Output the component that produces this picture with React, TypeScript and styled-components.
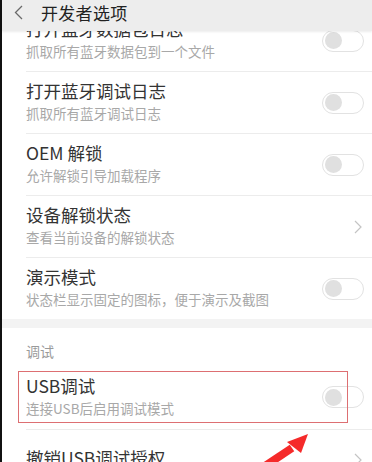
import styled, { createGlobalStyle } from "styled-components";

const GlobalStyle = createGlobalStyle`
  html, body {
    margin: 0;
    padding: 0;
    background: #ffffff;
  }
  body {
    font-family: "Noto Sans CJK SC", "Noto Sans", sans-serif;
  }
`;

const Frame = styled.div`
  position: relative;
  width: 372px;
  height: 462px;
  display: flex;
  overflow: hidden;
  background: #ffffff;
`;

const EdgeStrip = styled.div`
  width: 2px;
  flex-shrink: 0;
  background: #111111;
`;

const Screen = styled.div`
  flex: 1;
  display: flex;
  flex-direction: column;
  min-width: 0;
`;

const Header = styled.header`
  height: 31px;
  flex-shrink: 0;
  display: flex;
  align-items: center;
  gap: 18px;
  padding: 0 0 6px 12px;
  box-sizing: border-box;
  background: #ededed;
  box-shadow: 0 1px 2px rgba(0, 0, 0, 0.08);
  position: relative;
  z-index: 1;
`;

const HeaderTitle = styled.h1`
  margin: 0;
  font-size: 17px;
  font-weight: 400;
  color: #222222;
  letter-spacing: 0.3px;
`;

const Viewport = styled.div`
  flex: 1;
  overflow: hidden;
`;

// 列表已向上滚动了一部分
const List = styled.div`
  margin-top: -21px;
`;

const Row = styled.div`
  position: relative;
  padding-left: 24px;
`;

const RowInner = styled.div<{ $noLine?: boolean; $h?: number }>`
  display: flex;
  align-items: center;
  height: ${(p) => p.$h ?? 62}px;
  padding-right: 8px;
  box-sizing: border-box;
  border-bottom: ${(p) => (p.$noLine ? "none" : "1px solid #ececec")};
`;

const Texts = styled.div`
  flex: 1;
  display: flex;
  flex-direction: column;
  padding-bottom: 3px;
`;

const Title = styled.div`
  font-size: 17.5px;
  line-height: 24px;
  color: #333333;
`;

const Sub = styled.div`
  font-size: 13.5px;
  line-height: 20px;
  color: #a8a8a8;
`;

const Toggle = styled.div`
  width: 42px;
  height: 22px;
  border: 1px solid #e2e2e2;
  border-radius: 12px;
  box-sizing: border-box;
  display: flex;
  align-items: center;
  padding-left: 2px;
  background: #ffffff;
`;

const Knob = styled.div`
  width: 17px;
  height: 17px;
  border-radius: 50%;
  background: #e0e0e0;
`;

const Chevron = styled.div`
  width: 42px;
  display: flex;
  justify-content: flex-end;
  padding-right: 2px;
  box-sizing: border-box;
`;

const Band = styled.div`
  height: 9px;
  background: #f3f3f3;
`;

const SectionHeader = styled.div`
  height: 37px;
  padding: 13px 0 0 24px;
  box-sizing: border-box;
  font-size: 14px;
  color: #9a9a9a;
`;

const Highlight = styled.div`
  position: absolute;
  left: 16px;
  top: 6px;
  width: 330px;
  height: 52px;
  border: 1.5px solid #dd6f72;
  box-sizing: border-box;
  pointer-events: none;
`;

const Arrow = styled.svg`
  position: absolute;
  left: 262px;
  top: 428px;
`;

interface IItem {
  title: string;
  sub: string;
  kind: "toggle" | "link";
}

const items: IItem[] = [
  { title: "打开蓝牙数据包日志", sub: "抓取所有蓝牙数据包到一个文件", kind: "toggle" },
  { title: "打开蓝牙调试日志", sub: "抓取所有蓝牙调试日志", kind: "toggle" },
  { title: "OEM 解锁", sub: "允许解锁引导加载程序", kind: "toggle" },
  { title: "设备解锁状态", sub: "查看当前设备的解锁状态", kind: "link" },
  { title: "演示模式", sub: "状态栏显示固定的图标，便于演示及截图", kind: "toggle" },
];

function RightArrow() {
  return (
    <Chevron>
      <svg width="8" height="14" viewBox="0 0 8 14">
        <path d="M1 1 L7 7 L1 13" fill="none" stroke="#c4c4c4" strokeWidth="1.2" />
      </svg>
    </Chevron>
  );
}

function Switch() {
  return (
    <Toggle>
      <Knob />
    </Toggle>
  );
}

function App() {
  return (
    <Frame>
      <GlobalStyle />
      <EdgeStrip />
      <Screen>
        <Header>
          <svg width="9" height="15" viewBox="0 0 9 15">
            <path d="M8 1 L1.5 7.5 L8 14" fill="none" stroke="#6a6a6a" strokeWidth="1.3" />
          </svg>
          <HeaderTitle>开发者选项</HeaderTitle>
        </Header>
        <Viewport>
          <List>
            {items.map((item, i) => (
              <Row key={item.title}>
                <RowInner $noLine={i === items.length - 1} $h={i === items.length - 1 ? 61 : 62}>
                  <Texts>
                    <Title>{item.title}</Title>
                    <Sub>{item.sub}</Sub>
                  </Texts>
                  {item.kind === "toggle" ? <Switch /> : <RightArrow />}
                </RowInner>
              </Row>
            ))}
            <Band />
            <SectionHeader>调试</SectionHeader>
            <Row>
              <RowInner $h={65}>
                <Texts>
                  <Title>USB调试</Title>
                  <Sub>连接USB后启用调试模式</Sub>
                </Texts>
                <Switch />
              </RowInner>
              <Highlight />
            </Row>
            <Row>
              <RowInner $h={60}>
                <Texts>
                  <Title>撤销USB调试授权</Title>
                </Texts>
                <RightArrow />
              </RowInner>
            </Row>
          </List>
        </Viewport>
      </Screen>
      <Arrow width="60" height="40" viewBox="0 0 60 40">
        <path d="M0 40 L30 20" stroke="#f52a2a" strokeWidth="8" strokeLinecap="butt" />
        <polygon points="46,6 25,14 39,25" fill="#f52a2a" />
      </Arrow>
    </Frame>
  );
}

export default App;
